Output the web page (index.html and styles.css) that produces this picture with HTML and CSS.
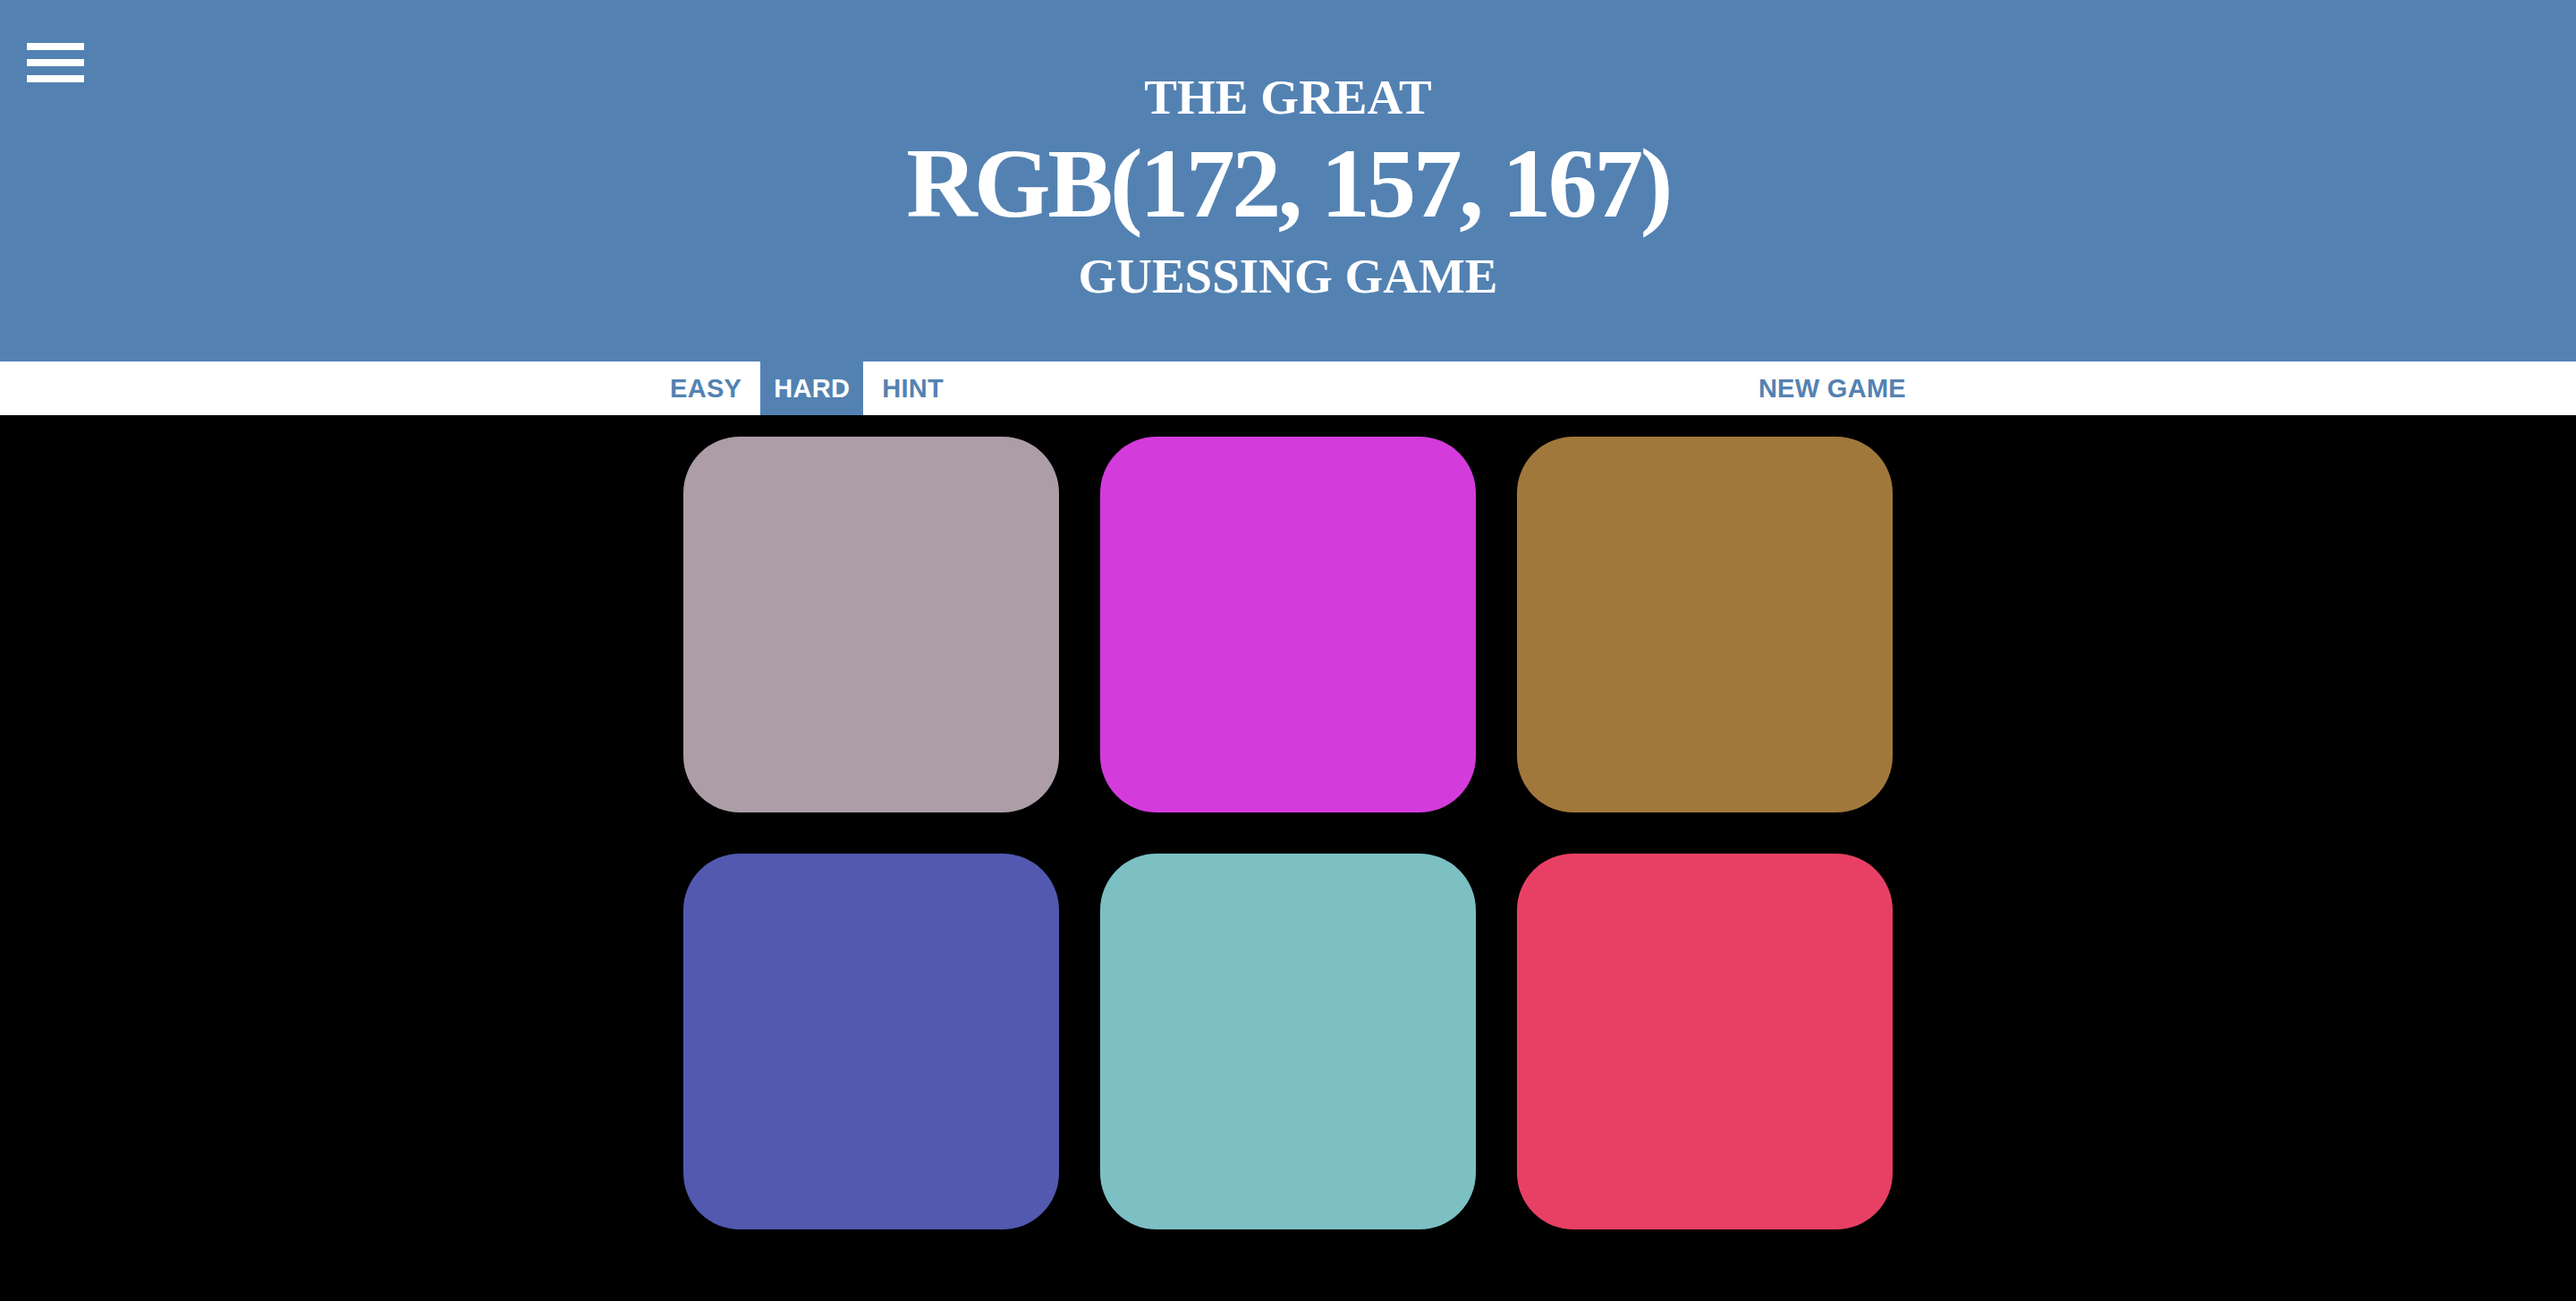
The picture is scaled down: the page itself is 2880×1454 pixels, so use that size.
FILE: index.html
```html
<!DOCTYPE html>
<html lang="en">
<head>
<meta charset="utf-8">
<title>The Great RGB Guessing Game</title>
<link rel="stylesheet" href="styles.css">
</head>
<body>
<header class="header">
  <button class="menu" aria-label="Menu">
    <span class="menu-bar"></span>
    <span class="menu-bar"></span>
    <span class="menu-bar"></span>
  </button>
  <h1 class="title">
    <span class="title-small">THE GREAT</span>
    <span class="title-big">RGB(172, 157, 167)</span>
    <span class="title-small title-last">GUESSING GAME</span>
  </h1>
</header>
<nav class="stripe">
  <div class="stripe-inner">
    <div class="modes">
      <button class="btn">EASY</button>
      <button class="btn btn-selected">HARD</button>
      <button class="btn">HINT</button>
    </div>
    <button class="btn">NEW GAME</button>
  </div>
</nav>
<main class="board">
  <div class="square sq-1"></div>
  <div class="square sq-2"></div>
  <div class="square sq-3"></div>
  <div class="square sq-4"></div>
  <div class="square sq-5"></div>
  <div class="square sq-6"></div>
</main>
</body>
</html>
```
FILE: styles.css
```css
* { box-sizing: border-box; }

html, body {
  margin: 0;
  padding: 0;
  background: #000;
}

body {
  font-family: "Liberation Sans", Arial, sans-serif;
  min-height: 1454px;
}

.header {
  position: relative;
  height: 404px;
  background: #5382b2;
  color: #fff;
  padding-top: 76px;
  text-align: center;
}

.menu {
  position: absolute;
  left: 30px;
  top: 48px;
  width: 64px;
  height: 44px;
  padding: 0;
  border: 0;
  background: transparent;
  display: flex;
  flex-direction: column;
  justify-content: space-between;
  cursor: pointer;
}

.menu-bar {
  display: block;
  width: 64px;
  height: 8px;
  background: #fff;
}

.title {
  margin: 0;
  font-family: "Liberation Serif", "Times New Roman", serif;
  font-weight: bold;
}

.title-small {
  display: block;
  font-size: 55px;
  line-height: 66px;
}

.title-big {
  display: block;
  font-size: 110px;
  line-height: 127px;
  letter-spacing: -3.5px;
}

.title-last {
  line-height: 79px;
}

.stripe {
  background: #fff;
  height: 60px;
}

.stripe-inner {
  width: 1412px;
  margin: 0 auto;
  height: 60px;
  display: flex;
  justify-content: space-between;
}

.modes {
  display: flex;
  gap: 6px;
}

.btn {
  border: 0;
  background: #fff;
  color: #5382b2;
  font-family: "Liberation Sans", Arial, sans-serif;
  font-weight: bold;
  font-size: 29px;
  letter-spacing: 0.3px;
  line-height: 60px;
  height: 60px;
  padding: 0 15px;
  margin: 0;
  cursor: pointer;
}

.btn-selected {
  background: #5382b2;
  color: #fff;
}

.board {
  width: 1352px;
  margin: 24px auto 0;
  display: grid;
  grid-template-columns: repeat(3, 420px);
  gap: 46px;
}

.square {
  width: 420px;
  height: 420px;
  border-radius: 63px;
}

.sq-1 { background: rgb(172, 157, 167); }
.sq-2 { background: rgb(211, 59, 219); }
.sq-3 { background: rgb(161, 120, 60); }
.sq-4 { background: rgb(82, 89, 175); }
.sq-5 { background: rgb(124, 192, 196); }
.sq-6 { background: rgb(232, 64, 100); }
```
